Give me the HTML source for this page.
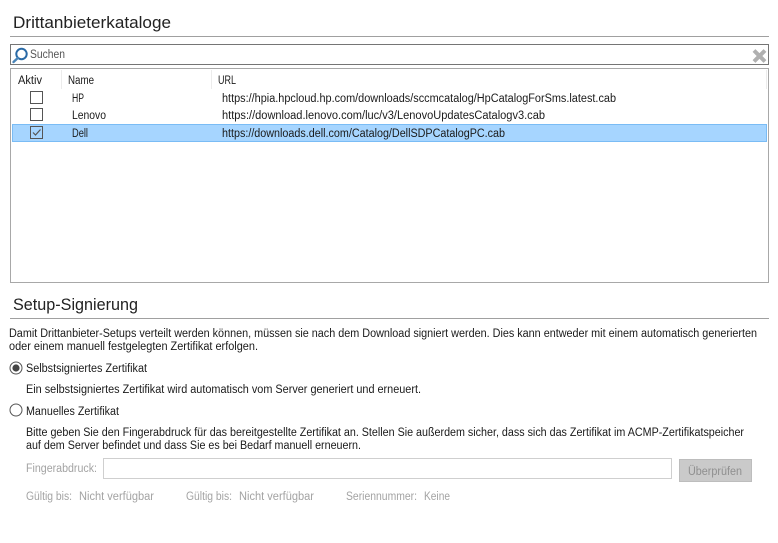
<!DOCTYPE html>
<html lang="de"><head><meta charset="utf-8"><title>Drittanbieterkataloge</title>
<style>
html,body{margin:0;padding:0;background:#fff;width:778px;height:543px;overflow:hidden}
svg{display:block}
text{font-family:"Liberation Sans",sans-serif;font-size:11.5px;fill:#1a1a1a;white-space:pre}
.h{font-size:16.5px;fill:#222}
.d{fill:#a3a3a3}
</style></head><body>
<svg width="778" height="543" viewBox="0 0 778 543" xmlns="http://www.w3.org/2000/svg">
<rect x="10" y="36" width="759" height="1" fill="#a0a0a0"/>
<text class="h" x="13" y="28" textLength="158" lengthAdjust="spacingAndGlyphs">Drittanbieterkataloge</text>

<rect x="10.5" y="44.5" width="758" height="20" fill="#fff" stroke="#757575"/>
<circle cx="21.5" cy="54" r="5.2" fill="none" stroke="#2a6aa6" stroke-width="2"/>
<path d="M17.8 58 L13.5 62" stroke="#4a85b8" stroke-width="2.4" stroke-linecap="round"/>
<text x="30" y="58" style="fill:#555" textLength="35" lengthAdjust="spacingAndGlyphs">Suchen</text>
<path d="M754 50.5 L765 61.5 M765 50.5 L754 61.5" stroke="#b0b0b0" stroke-width="4"/>

<rect x="10.5" y="68.5" width="758" height="214" fill="#fff" stroke="#a8a8a8"/>
<rect x="61" y="70" width="1" height="19" fill="#ececec"/>
<rect x="211" y="70" width="1" height="19" fill="#ececec"/>
<rect x="766" y="70" width="1" height="19" fill="#ececec"/>
<text x="18" y="84" textLength="24" lengthAdjust="spacingAndGlyphs">Aktiv</text>
<text x="68" y="84" textLength="26" lengthAdjust="spacingAndGlyphs">Name</text>
<text x="218" y="84" textLength="18" lengthAdjust="spacingAndGlyphs">URL</text>

<rect x="12.5" y="124.5" width="754" height="17" fill="#a6d5ff" stroke="#7abcf5"/>
<rect x="30.5" y="91.5" width="12" height="12" fill="#fff" stroke="#555"/>
<rect x="30.5" y="108.5" width="12" height="12" fill="#fff" stroke="#555"/>
<rect x="30.5" y="126.5" width="12" height="12" fill="#a6d5ff" stroke="#555"/>
<path d="M33 132.5 L35.5 135 L40.5 129.5" fill="none" stroke="#555" stroke-width="1.2"/>

<text x="72" y="102" textLength="12" lengthAdjust="spacingAndGlyphs">HP</text>
<text x="72" y="119" textLength="34" lengthAdjust="spacingAndGlyphs">Lenovo</text>
<text x="72" y="137" textLength="16" lengthAdjust="spacingAndGlyphs">Dell</text>
<text x="222" y="102" textLength="394" lengthAdjust="spacingAndGlyphs">https://hpia.hpcloud.hp.com/downloads/sccmcatalog/HpCatalogForSms.latest.cab</text>
<text x="222" y="119" textLength="323" lengthAdjust="spacingAndGlyphs">https://download.lenovo.com/luc/v3/LenovoUpdatesCatalogv3.cab</text>
<text x="222" y="137" textLength="283" lengthAdjust="spacingAndGlyphs">https://downloads.dell.com/Catalog/DellSDPCatalogPC.cab</text>

<text class="h" x="13" y="310" textLength="125" lengthAdjust="spacingAndGlyphs">Setup-Signierung</text>
<rect x="10" y="318" width="759" height="1" fill="#a0a0a0"/>
<text x="9" y="337" textLength="748" lengthAdjust="spacingAndGlyphs">Damit Drittanbieter-Setups verteilt werden können, müssen sie nach dem Download signiert werden. Dies kann entweder mit einem automatisch generierten</text>
<text x="9" y="350" textLength="249" lengthAdjust="spacingAndGlyphs">oder einem manuell festgelegten Zertifikat erfolgen.</text>

<circle cx="16" cy="368" r="6" fill="#fff" stroke="#555"/>
<circle cx="16" cy="368" r="3.6" fill="#444"/>
<text x="26" y="372" textLength="121" lengthAdjust="spacingAndGlyphs">Selbstsigniertes Zertifikat</text>
<text x="26" y="393" textLength="395" lengthAdjust="spacingAndGlyphs">Ein selbstsigniertes Zertifikat wird automatisch vom Server generiert und erneuert.</text>
<circle cx="16" cy="410" r="6" fill="#fff" stroke="#555"/>
<text x="26" y="415" textLength="93" lengthAdjust="spacingAndGlyphs">Manuelles Zertifikat</text>
<text x="26" y="436" textLength="718" lengthAdjust="spacingAndGlyphs">Bitte geben Sie den Fingerabdruck für das bereitgestellte Zertifikat an. Stellen Sie außerdem sicher, dass sich das Zertifikat im ACMP-Zertifikatspeicher</text>
<text x="26" y="449" textLength="335" lengthAdjust="spacingAndGlyphs">auf dem Server befindet und dass Sie es bei Bedarf manuell erneuern.</text>

<text class="d" x="26" y="472" textLength="71" lengthAdjust="spacingAndGlyphs">Fingerabdruck:</text>
<rect x="103.5" y="458.5" width="568" height="20" fill="#fff" stroke="#cfcfcf"/>
<rect x="679.5" y="459.5" width="72" height="22" fill="#cacaca" stroke="#bdbdbd"/>
<text x="688" y="475" style="fill:#8f8f8f" textLength="54" lengthAdjust="spacingAndGlyphs">Überprüfen</text>

<text class="d" x="26" y="500" textLength="46" lengthAdjust="spacingAndGlyphs">Gültig bis:</text>
<text class="d" x="79" y="500" textLength="75" lengthAdjust="spacingAndGlyphs">Nicht verfügbar</text>
<text class="d" x="186" y="500" textLength="46" lengthAdjust="spacingAndGlyphs">Gültig bis:</text>
<text class="d" x="239" y="500" textLength="75" lengthAdjust="spacingAndGlyphs">Nicht verfügbar</text>
<text class="d" x="346" y="500" textLength="71" lengthAdjust="spacingAndGlyphs">Seriennummer:</text>
<text class="d" x="424" y="500" textLength="26" lengthAdjust="spacingAndGlyphs">Keine</text>
</svg>
</body></html>
